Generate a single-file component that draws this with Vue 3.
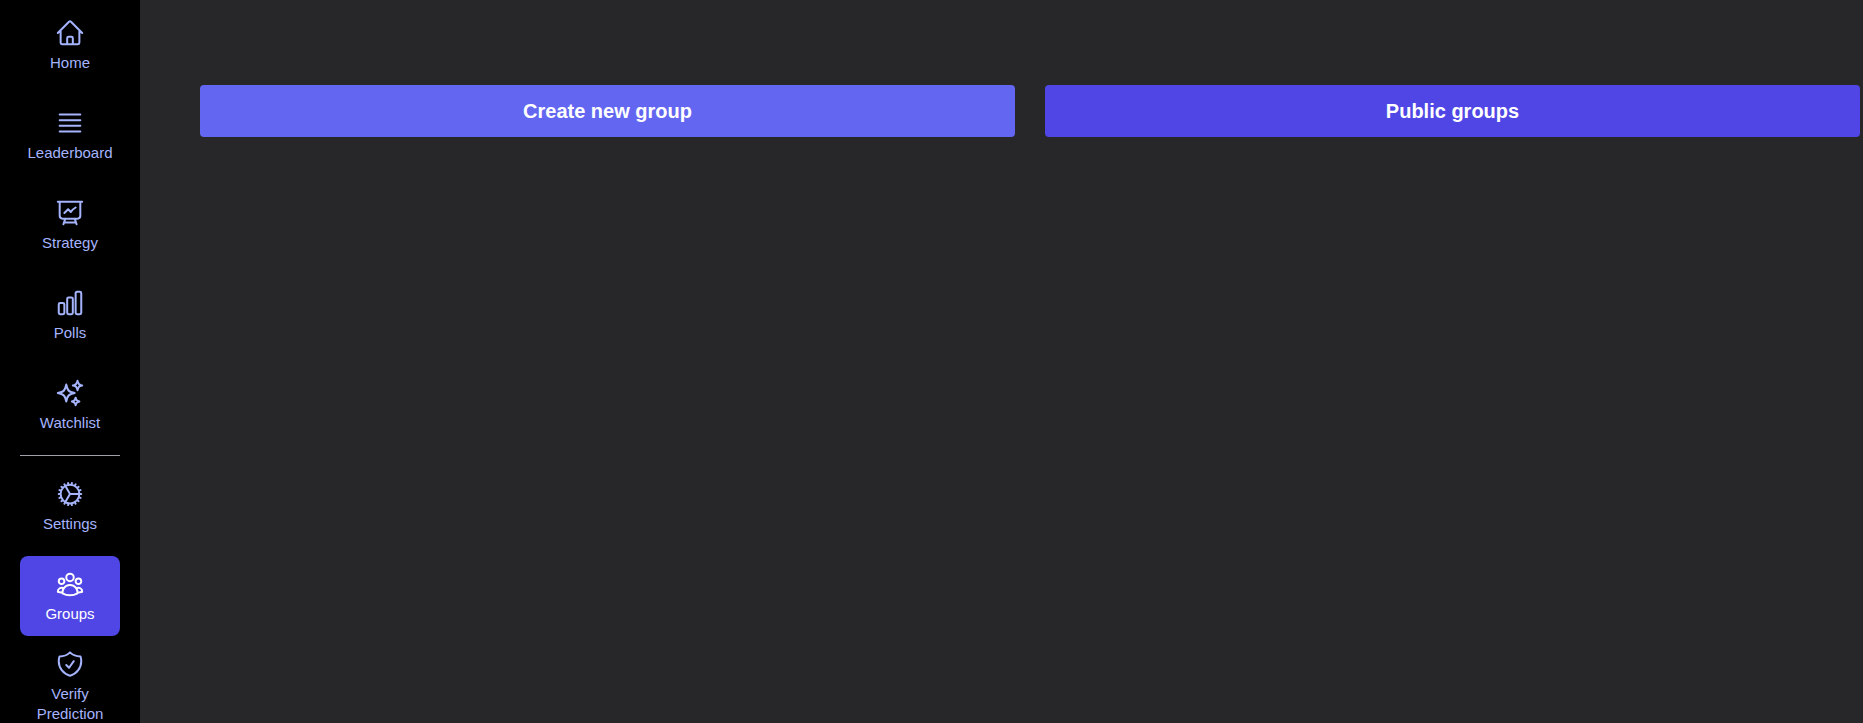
<template>
  <div class="layout">
    <aside class="sidebar">
      <template v-for="item in navItems" :key="item.label">
        <a class="nav-item" :class="{ active: item.active }" href="#">
          <svg class="nav-icon" viewBox="0 0 24 24" fill="none" stroke="currentColor" stroke-width="1.6" stroke-linecap="round" stroke-linejoin="round">
            <path :d="item.icon" />
          </svg>
          <span class="nav-label">{{ item.label }}</span>
        </a>
        <hr v-if="item.divider" class="divider" />
      </template>
    </aside>

    <main class="content">
      <div class="actions">
        <button class="action create">Create new group</button>
        <button class="action public">Public groups</button>
      </div>
    </main>
  </div>
</template>

<script setup>
const navItems = [
  {
    label: 'Home',
    icon: 'm2.25 12 8.954-8.955c.44-.439 1.152-.439 1.591 0L21.75 12M4.5 9.75v10.125c0 .621.504 1.125 1.125 1.125H9.75v-4.875c0-.621.504-1.125 1.125-1.125h2.25c.621 0 1.125.504 1.125 1.125V21h4.125c.621 0 1.125-.504 1.125-1.125V9.75M8.25 21h8.25'
  },
  {
    label: 'Leaderboard',
    icon: 'M3.75 5.25h16.5m-16.5 4.5h16.5m-16.5 4.5h16.5m-16.5 4.5h16.5'
  },
  {
    label: 'Strategy',
    icon: 'M3.75 3v11.25A2.25 2.25 0 0 0 6 16.5h2.25M3.75 3h-1.5m1.5 0h16.5m0 0h1.5m-1.5 0v11.25A2.25 2.25 0 0 1 18 16.5h-2.25m-7.5 0h7.5m-7.5 0-1 3m8.5-3 1 3m0 0 .5 1.5m-.5-1.5h-9.5m0 0-.5 1.5m.75-9 3-3 2.148 2.148A12.061 12.061 0 0 1 16.5 7.605'
  },
  {
    label: 'Polls',
    icon: 'M3 13.125C3 12.504 3.504 12 4.125 12h2.25c.621 0 1.125.504 1.125 1.125v6.75C7.5 20.496 6.996 21 6.375 21h-2.25A1.125 1.125 0 0 1 3 19.875v-6.75ZM9.75 8.625c0-.621.504-1.125 1.125-1.125h2.25c.621 0 1.125.504 1.125 1.125v11.25c0 .621-.504 1.125-1.125 1.125h-2.25a1.125 1.125 0 0 1-1.125-1.125V8.625ZM16.5 4.125c0-.621.504-1.125 1.125-1.125h2.25C20.496 3 21 3.504 21 4.125v15.75c0 .621-.504 1.125-1.125 1.125h-2.25a1.125 1.125 0 0 1-1.125-1.125V4.125Z'
  },
  {
    label: 'Watchlist',
    divider: true,
    icon: 'M9.813 15.904 9 18.75l-.813-2.846a4.5 4.5 0 0 0-3.09-3.09L2.25 12l2.846-.813a4.5 4.5 0 0 0 3.09-3.09L9 5.25l.813 2.846a4.5 4.5 0 0 0 3.09 3.09L15.75 12l-2.846.813a4.5 4.5 0 0 0-3.09 3.09ZM18.259 8.715 18 9.75l-.259-1.035a3.375 3.375 0 0 0-2.455-2.456L14.25 6l1.036-.259a3.375 3.375 0 0 0 2.455-2.456L18 2.25l.259 1.035a3.375 3.375 0 0 0 2.456 2.456L21.75 6l-1.035.259a3.375 3.375 0 0 0-2.456 2.456ZM16.894 20.567 16.5 21.75l-.394-1.183a2.25 2.25 0 0 0-1.423-1.423L13.5 18.75l1.183-.394a2.25 2.25 0 0 0 1.423-1.423l.394-1.183.394 1.183a2.25 2.25 0 0 0 1.423 1.423l1.183.394-1.183.394a2.25 2.25 0 0 0-1.423 1.423Z'
  },
  {
    label: 'Settings',
    icon: 'M4.5 12a7.5 7.5 0 0 0 15 0m-15 0a7.5 7.5 0 1 1 15 0m-15 0H3m16.5 0H21m-1.5 0H12m-8.457 3.077 1.41-.513m14.095-5.13 1.41-.513M5.106 17.785l1.15-.964m11.49-9.642 1.149-.964M7.501 19.795l.75-1.3m7.5-12.99.75-1.3m-6.063 16.658.26-1.477m2.605-14.772.26-1.477m0 17.726-.26-1.477M10.698 4.614l-.26-1.477M16.5 19.794l-.75-1.299M7.5 4.205 12 12m6.894 5.785-1.149-.964M6.256 7.178l-1.15-.964m15.352 8.864-1.41-.513M4.954 9.435l-1.41-.514M12.002 12l-3.75 6.495'
  },
  {
    label: 'Groups',
    active: true,
    icon: 'M18 18.72a9.094 9.094 0 0 0 3.741-.479 3 3 0 0 0-4.682-2.72m.94 3.198.001.031c0 .225-.012.447-.037.666A11.944 11.944 0 0 1 12 21c-2.17 0-4.207-.576-5.963-1.584A6.062 6.062 0 0 1 6 18.719m12 0a5.971 5.971 0 0 0-.941-3.197m0 0A5.995 5.995 0 0 0 12 12.75a5.995 5.995 0 0 0-5.058 2.772m0 0a3 3 0 0 0-4.681 2.72 8.986 8.986 0 0 0 3.74.477m.94-3.197a5.971 5.971 0 0 0-.94 3.197M15 6.75a3 3 0 1 1-6 0 3 3 0 0 1 6 0Zm6 3a2.25 2.25 0 1 1-4.5 0 2.25 2.25 0 0 1 4.5 0Zm-13.5 0a2.25 2.25 0 1 1-4.5 0 2.25 2.25 0 0 1 4.5 0Z'
  },
  {
    label: 'Verify Prediction',
    icon: 'M9 12.75 11.25 15 15 9.75m-3-7.036A11.959 11.959 0 0 1 3.598 6 11.99 11.99 0 0 0 3 9.749c0 5.592 3.824 10.29 9 11.623 5.176-1.332 9-6.03 9-11.622 0-1.31-.21-2.571-.598-3.751h-.152c-3.196 0-6.1-1.248-8.25-3.285Z'
  }
]
</script>

<style scoped>
.layout {
  display: flex;
  height: 100vh;
  overflow: hidden;
  background: #27272a;
  font-family: "Liberation Sans", Arial, sans-serif;
}

.sidebar {
  flex: 0 0 140px;
  display: flex;
  flex-direction: column;
  align-items: center;
  padding-top: 5px;
  background: #000;
  overflow: hidden;
}

.nav-item {
  flex: none;
  width: 100px;
  height: 80px;
  margin-bottom: 10px;
  display: flex;
  flex-direction: column;
  align-items: center;
  justify-content: center;
  gap: 5px;
  border-radius: 8px;
  color: #a5b4fc;
  text-decoration: none;
  text-align: center;
}

.nav-item.active {
  background: #4f46e5;
  color: #fff;
}

.nav-icon {
  flex: none;
  width: 30px;
  height: 30px;
  margin-top: 1px;
}

.nav-label {
  font-size: 15px;
  line-height: 20px;
}

.divider {
  flex: none;
  width: 100px;
  height: 1px;
  margin: 0 0 10px;
  border: 0;
  background: #a1a1aa;
}

.content {
  flex: 1;
  padding: 85px 3px 0 60px;
}

.actions {
  display: flex;
  gap: 30px;
}

.action {
  flex: 1;
  height: 52px;
  border: 0;
  border-radius: 4px;
  color: #fff;
  font-family: inherit;
  font-size: 20px;
  font-weight: 700;
}

.create {
  background: #6366f1;
}

.public {
  background: #4f46e5;
}
</style>
